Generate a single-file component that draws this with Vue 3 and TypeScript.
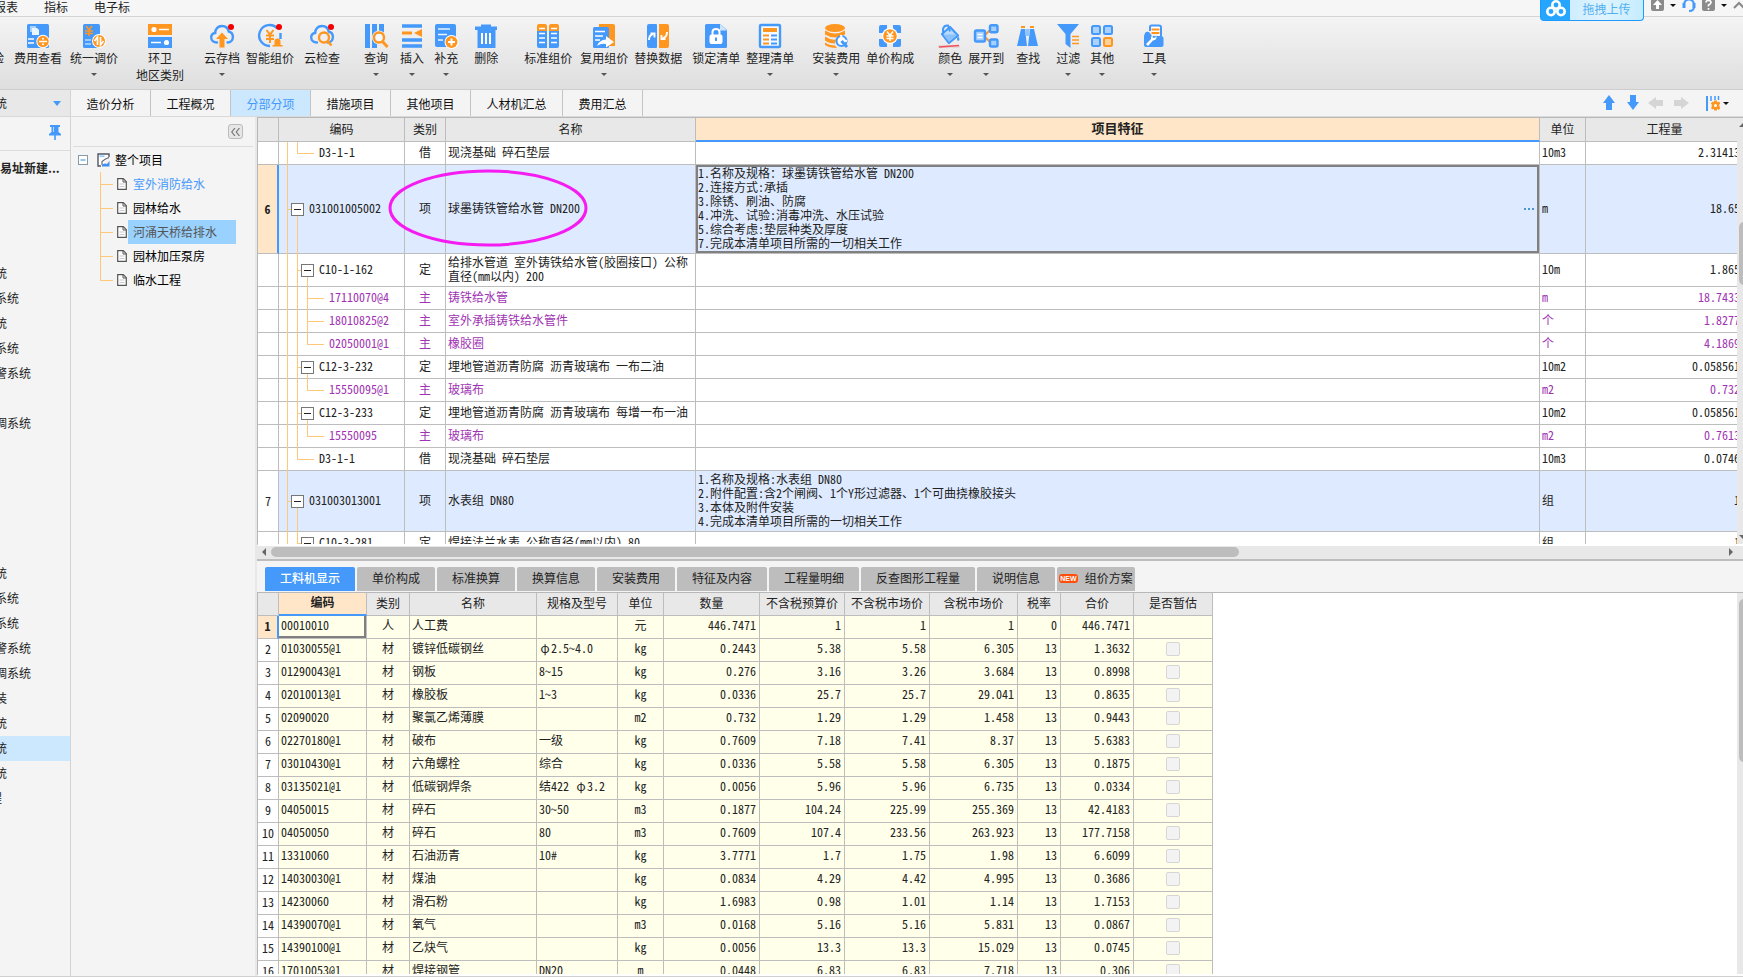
<script setup lang="ts">
interface Tool { label: string; sub?: string; icon: string; gap: number; menu?: boolean }
interface Guide { x: number; part: 'whole' | 'top' | 'bottom' }
interface BillRow {
  no?: string; level: number; box: boolean; last?: boolean; code: string; kind: string
  name: string; feature?: string[]; unit: string; qty: string
  tone?: 'item' | 'main'; tall?: boolean; current?: boolean
}

const tools: Tool[] = [
  { label: '费用查看', icon: 'fee', gap: 10 },
  { label: '统一调价', icon: 'adjust', gap: 8, menu: true },
  { label: '环卫', sub: '地区类别', icon: 'region', gap: 18 },
  { label: '云存档', icon: 'cloudUp', gap: 20, menu: true },
  { label: '智能组价', icon: 'smart', gap: 6 },
  { label: '云检查', icon: 'cloudCheck', gap: 10 },
  { label: '查询', icon: 'query', gap: 24, menu: true },
  { label: '插入', icon: 'insert', gap: 12, menu: true },
  { label: '补充', icon: 'append', gap: 10, menu: true },
  { label: '删除', icon: 'trash', gap: 16 },
  { label: '标准组价', icon: 'standard', gap: 26 },
  { label: '复用组价', icon: 'reuse', gap: 8, menu: true },
  { label: '替换数据', icon: 'replace', gap: 6 },
  { label: '锁定清单', icon: 'lock', gap: 10 },
  { label: '整理清单', icon: 'tidy', gap: 6, menu: true },
  { label: '安装费用', icon: 'install', gap: 18, menu: true },
  { label: '单价构成', icon: 'price', gap: 6 },
  { label: '颜色', icon: 'color', gap: 24, menu: true },
  { label: '展开到', icon: 'expand', gap: 6, menu: true },
  { label: '查找', icon: 'find', gap: 12 },
  { label: '过滤', icon: 'filter', gap: 16, menu: true },
  { label: '其他', icon: 'other', gap: 10, menu: true },
  { label: '工具', icon: 'tool', gap: 28, menu: true },
]

const cloud = '<path d="M7 18.500C3.500 18.500 1.200 16.300 1.200 13.500C1.200 11 3 9.300 5.200 9C5.200 4.800 8.200 2 12 2C15.500 2 18 4.200 18.700 7.500C21.200 8.200 22.900 10.200 22.900 12.900C22.900 16 20.600 18.300 17.500 18.500" fill="none" stroke="#4499fb" stroke-width="2.400" stroke-linecap="round"/>'
const dot = '<circle cx="21" cy="3" r="3" fill="#f40000"/>'
const yen = '<path d="M8.500 6L12 10.500L15.500 6M12 10.500V19M8 11.500H16M8 15H16" fill="none" stroke="#ff961f" stroke-width="2"/>'

const icons: Record<string, string> = {
  fee: '<rect x="1" width="22" height="24" rx="1.500" fill="#4499fb"/><path d="M4 2h6v6H4z" fill="#a9d3ff"/><path d="M6 4h5l2 2v5H6z" fill="#eaf5ff"/><path d="M2 15h6M2 19h6" stroke="#fff" stroke-width="1.600"/><circle cx="17" cy="17.500" r="6.700" fill="#fff"/><circle cx="17" cy="17.500" r="5.700" fill="#ff961f"/><path d="M13 17.500h8" stroke="#fff" stroke-width="1.500"/><circle cx="17" cy="14.800" r="1" fill="#fff"/><circle cx="17" cy="20.300" r="1" fill="#fff"/>',
  adjust: '<rect x="1" width="17" height="24" rx="1.500" fill="#4499fb"/><path d="M4 2l3 4l3-4M7 6v6M3 7h8M3 9.500h8" fill="none" stroke="#ff961f" stroke-width="1.600"/><path d="M3 16h6M3 20h6" stroke="#b5daff" stroke-width="1.500"/><circle cx="17" cy="17" r="7" fill="#fff"/><circle cx="17" cy="17" r="6" fill="#ff961f"/><path d="M15.500 21v-8l-3 4M18.500 13v8l3-4" fill="none" stroke="#fff" stroke-width="1.700"/>',
  region: '<rect y="0" width="24" height="11" fill="#ff961f"/><rect y="13" width="24" height="11" fill="#4499fb"/><circle cx="6" cy="5.500" r="2.600" fill="#fff"/><path d="M11 5.500h10M3 18.500h10" stroke="#fff" stroke-width="1.600"/><circle cx="18.500" cy="18.500" r="2.600" fill="#fff"/>',
  cloudUp: cloud + '<path d="M12 8.500l6 6.500h-3.500v8.500h-5V15H6z" fill="#ff961f"/>' + dot,
  smart: '<path d="M19.500 4.500A10.500 10.500 0 1 0 12 22M22.500 9v6" fill="none" stroke="#4499fb" stroke-width="2.400"/>' + yen + '<path d="M19.500 14.500a3 3 0 0 1 3 3v3.500h2v1.500h-10V21h2v-3.500a3 3 0 0 1 3-3z" fill="#ff961f"/>' + dot,
  cloudCheck: cloud + '<circle cx="14" cy="13.500" r="5" fill="#eee" stroke="#ff961f" stroke-width="2.400"/><path d="M17.500 17l4 4.500" stroke="#ff961f" stroke-width="2.600"/>' + dot,
  query: '<rect x="1" width="5" height="24" fill="#4499fb"/><rect x="8" width="5" height="24" fill="#4499fb"/><rect x="15" width="5" height="10" fill="#4499fb"/><circle cx="15" cy="13.500" r="7" fill="#eee"/><circle cx="15" cy="13.500" r="5" fill="#f4f8ff" stroke="#ff961f" stroke-width="2.400"/><path d="M18.500 17.500l5 5.500" stroke="#ff961f" stroke-width="3"/>',
  insert: '<path d="M2 2h20M2 16h20M2 22h20" stroke="#4499fb" stroke-width="3.400"/><path d="M2 9h10" stroke="#ff961f" stroke-width="3"/><path d="M14 9l8-4v8z" fill="#ff961f"/>',
  append: '<rect x="1" width="21" height="23" rx="2" fill="#4499fb"/><path d="M4 5h12M4 10.500h9M4 16h5" stroke="#e8f4ff" stroke-width="1.700"/><circle cx="17.500" cy="18" r="7" fill="#fff"/><circle cx="17.500" cy="18" r="6" fill="#ff961f"/><path d="M17.500 14.500v7M14 18h7" stroke="#fff" stroke-width="1.900"/>',
  trash: '<path d="M1 2.500h6V.500h10v2h6V6h-1.500v18h-18V6H1z" fill="#4499fb"/><path d="M8 9v11M12 9v11M16 9v11" stroke="#fff" stroke-width="2"/>',
  standard: '<path d="M1 2q0-2 2-2h6q2 0 2 2v6H1zM13 2q0-2 2-2h6q2 0 2 2v6H13z" fill="#ff961f"/><path d="M1 7h10v17H3q-2 0-2-2zM13 7h10v15q0 2-2 2h-8z" fill="#4499fb"/><path d="M3 4.500h6M15 4.500h6M3 9.500h6M15 9.500h6M3 14h6M15 14h6M3 18.500h6M15 18.500h6" stroke="#fff" stroke-width="1.400"/>',
  reuse: '<path d="M7 0h14q2 0 2 2v20h-8L7 10z" fill="#ff961f"/><rect x="1" y="3" width="16" height="21" rx="1.500" fill="#4499fb"/><path d="M3 7.500h10M3 12h8M3 16h5" stroke="#fff" stroke-width="1.500"/><path d="M5 22q2-6 9-6.500V12l8 6l-8 5.500V20q-5-1-9 2z" fill="#fff"/>',
  replace: '<path d="M3 0h7q1 0 1 1v22q0 1-1 1H3q-2 0-2-2V2q0-2 2-2z" fill="#4499fb"/><path d="M13 0h8q2 0 2 2v20q0 2-2 2h-8z" fill="#ff961f"/><path d="M3 16q0-5 4-6M4.500 9.500h4v4M21 8q0 5-4 6M19.500 15h-4v-4" fill="none" stroke="#fff" stroke-width="1.900"/>',
  lock: '<path d="M1 1.500Q1 0 2.500 0H16l7 6v16.500q0 1.500-1.500 1.500h-19Q1 24 1 22.500z" fill="#4499fb"/><path d="M16 0l7 6.500h-7z" fill="#cfe6ff"/><path d="M8.500 11V8q0-3 3.500-3t3.500 3v3" fill="none" stroke="#fff" stroke-width="2"/><rect x="5.500" y="10.500" width="13" height="9.500" rx="2" fill="#fff"/><path d="M12 13.500v3.500" stroke="#4499fb" stroke-width="2"/>',
  tidy: '<rect x="2" y="1" width="20" height="22" rx="1" fill="#f6faff" stroke="#4499fb" stroke-width="2.400"/><rect x="5" y="4" width="14" height="4" fill="#ff961f"/><path d="M5 11.500h6M5 15.500h6M5 19.500h6" stroke="#ff961f" stroke-width="1.800"/><path d="M13 11.500h6M13 15.500h6M13 19.500h6" stroke="#4499fb" stroke-width="1.800"/>',
  install: '<ellipse cx="11" cy="4" rx="10" ry="4" fill="#ff961f"/><path d="M1 6.500q10 6 20 0v4q-10 6-20 0zM1 12.500q6 4 11 3q-1 2-1 4q-6 0-10-3zM1 18.500q4 3 10 3l2 2.500q-8 0-12-3z" fill="#ff961f"/><circle cx="17.500" cy="17" r="5" fill="#fff" stroke="#4499fb" stroke-width="2.200"/><path d="M17 11l1 5l5 1" fill="none" stroke="#fff" stroke-width="2.200"/><path d="M17.500 17l5.500 6" stroke="#4499fb" stroke-width="3"/>',
  price: '<path d="M1 3q0-2 2-2h6v4L5 9H1zM23 3q0-2-2-2h-6v4l4 4h4zM1 21q0 2 2 2h6v-4l-4-4H1zM23 21q0 2-2 2h-6v-4l4-4h4z" fill="#4499fb"/><circle cx="12" cy="12" r="8" fill="#fff"/><circle cx="12" cy="12" r="6.800" fill="#ff961f"/><path d="M9 7.500l3 4l3-4M12 11.500V17M8.500 12h7M8.500 14.500h7" fill="none" stroke="#fff" stroke-width="1.500"/>',
  color: '<path d="M4 10L12 3l8 8.500L11 19z" fill="#b9dbff" stroke="#4499fb" stroke-width="2.200" stroke-linejoin="round"/><path d="M5 11V5q1-4 5-3.500l2 6" fill="none" stroke="#4499fb" stroke-width="2"/><path d="M5 10.500h14L11 18z" fill="#8cc1fc"/><path d="M20 12q3 4 0 5q-2-1 0-5z" fill="#4499fb"/><rect x="0" y="21" width="22" height="3" rx="1" fill="#e4d8d8"/><path d="M1 23l20-1.500" stroke="#f2505b" stroke-width="1.400"/>',
  expand: '<path d="M10 12L17 5M10 12l7 7" stroke="#ff961f" stroke-width="1.800"/><rect x="1" y="6.500" width="10" height="11" rx="1.500" fill="#a4cfff" stroke="#4499fb" stroke-width="2.400"/><path d="M3.500 10.500h5M3.500 13.500h5" stroke="#fff" stroke-width="1.400"/><rect x="16" y="1.200" width="7.500" height="7" rx="1.500" fill="#a4cfff" stroke="#4499fb" stroke-width="2.400"/><rect x="16" y="15.500" width="7.500" height="7" rx="1.500" fill="#a4cfff" stroke="#4499fb" stroke-width="2.400"/>',
  find: '<path d="M5 2h4v2H5zM14 2h4v2h-4z" fill="#ff961f"/><path d="M5 5h4l2 17H1zM14 5h4l4 17H12z" fill="#4499fb"/><rect x="9.500" y="5" width="4" height="7" fill="#8dc3ff"/>',
  filter: '<path d="M1 0h22L14.500 10v14l-5-4V10z" fill="#4499fb"/><path d="M16 12.500h7M16 16h7M16 19.500h7" stroke="#ff961f" stroke-width="1.700"/>',
  other: '<g fill="#a9d2ff" stroke="#4499fb" stroke-width="2"><rect x="2" y="2" width="8" height="8" rx="1.500"/><rect x="14" y="2" width="8" height="8" rx="1.500"/><rect x="2" y="14" width="8" height="8" rx="1.500"/></g><rect x="14" y="14" width="8" height="8" rx="1.500" fill="#ffd09a" stroke="#ff961f" stroke-width="2"/>',
  tool: '<path d="M8 7V3q0-1.500 1.500-1.500H17q2 0 2 2V12" fill="#fff" stroke="#4499fb" stroke-width="2"/><path d="M9.500 5.500h8M9.500 9h8" stroke="#ff961f" stroke-width="1.800"/><path d="M3 9q1.500-2 4-1l3 4h9q2.500 0 2.500 2.500V21q0 2-2 2H4q-2 0-2-2v-9z" fill="#4499fb"/><path d="M4 20l5-5q-.500-3 2-4l-.500 2.500l2 .500l2-2q.500 4-3.500 4.500L6 22z" fill="#fff"/>',
}

const sideItems = [
  '统', '系统', '统', '系统', '警系统', '', '调系统', '', '', '', '', '',
  '统', '系统', '系统', '警系统', '调系统', '装', '统', '统', '统', '程',
]
const sideSelected = 19

const pageTabs = ['造价分析', '工程概况', '分部分项', '措施项目', '其他项目', '人材机汇总', '费用汇总']
const units = ['室外消防给水', '园林给水', '河涌天桥给排水', '园林加压泵房', '临水工程']

const bill: BillRow[] = [
  { level: 2, box: false, last: true, code: 'D3-1-1', kind: '借', name: '现浇基础 碎石垫层', unit: '10m3', qty: '2.31413' },
  {
    no: '6', level: 1, box: true, code: '031001005002', kind: '项', name: '球墨铸铁管给水管 DN200', unit: 'm', qty: '18.65', tone: 'item', current: true,
    feature: ['1.名称及规格：球墨铸铁管给水管 DN200', '2.连接方式:承插', '3.除锈、刷油、防腐', '4.冲洗、试验:消毒冲洗、水压试验', '5.综合考虑:垫层种类及厚度', '7.完成本清单项目所需的一切相关工作'],
  },
  { level: 2, box: true, code: 'C10-1-162', kind: '定', name: '给排水管道 室外铸铁给水管(胶圈接口) 公称直径(mm以内) 200', unit: '10m', qty: '1.865', tall: true },
  { level: 3, box: false, code: '17110070@4', kind: '主', name: '铸铁给水管', unit: 'm', qty: '18.7433', tone: 'main' },
  { level: 3, box: false, code: '18010825@2', kind: '主', name: '室外承插铸铁给水管件', unit: '个', qty: '1.8277', tone: 'main' },
  { level: 3, box: false, last: true, code: '02050001@1', kind: '主', name: '橡胶圈', unit: '个', qty: '4.1869', tone: 'main' },
  { level: 2, box: true, code: 'C12-3-232', kind: '定', name: '埋地管道沥青防腐 沥青玻璃布 一布二油', unit: '10m2', qty: '0.058561' },
  { level: 3, box: false, last: true, code: '15550095@1', kind: '主', name: '玻璃布', unit: 'm2', qty: '0.732', tone: 'main' },
  { level: 2, box: true, code: 'C12-3-233', kind: '定', name: '埋地管道沥青防腐 沥青玻璃布 每增一布一油', unit: '10m2', qty: '0.058561' },
  { level: 3, box: false, last: true, code: '15550095', kind: '主', name: '玻璃布', unit: 'm2', qty: '0.7613', tone: 'main' },
  { level: 2, box: false, last: true, code: 'D3-1-1', kind: '借', name: '现浇基础 碎石垫层', unit: '10m3', qty: '0.0746' },
  {
    no: '7', level: 1, box: true, code: '031003013001', kind: '项', name: '水表组 DN80', unit: '组', qty: '1', tone: 'item',
    feature: ['1.名称及规格:水表组 DN80', '2.附件配置:含2个闸阀、1个Y形过滤器、1个可曲挠橡胶接头', '3.本体及附件安装', '4.完成本清单项目所需的一切相关工作'],
  },
  { level: 2, box: true, code: 'C10-3-281', kind: '定', name: '焊接法兰水表 公称直径(mm以内) 80', unit: '组', qty: '1' },
]

function guides(r: BillRow): Guide[] {
  const g: Guide[] = []
  for (let l = 1; l < r.level; l++) g.push({ x: l * 10 - 2, part: 'whole' })
  g.push({ x: r.level * 10 - 2, part: r.last ? 'top' : 'whole' })
  if (r.box) g.push({ x: r.level * 10 + 8, part: 'bottom' })
  return g
}

const detailTabs = [
  { t: '工料机显示', w: 'w90' }, { t: '单价构成', w: 'w78' }, { t: '标准换算', w: 'w78' }, { t: '换算信息', w: 'w78' },
  { t: '安装费用', w: 'w78' }, { t: '特征及内容', w: 'w90' }, { t: '工程量明细', w: 'w90' }, { t: '反查图形工程量', w: 'w114' },
  { t: '说明信息', w: 'w78' }, { t: '组价方案', w: 'w78', isNew: true },
]
const detailHead = ['编码', '类别', '名称', '规格及型号', '单位', '数量', '不含税预算价', '不含税市场价', '含税市场价', '税率', '合价', '是否暂估']
const detail: string[][] = [
  ['00010010', '人', '人工费', '', '元', '446.7471', '1', '1', '1', '0', '446.7471'],
  ['01030055@1', '材', '镀锌低碳钢丝', 'φ2.5~4.0', 'kg', '0.2443', '5.38', '5.58', '6.305', '13', '1.3632'],
  ['01290043@1', '材', '钢板', '8~15', 'kg', '0.276', '3.16', '3.26', '3.684', '13', '0.8998'],
  ['02010013@1', '材', '橡胶板', '1~3', 'kg', '0.0336', '25.7', '25.7', '29.041', '13', '0.8635'],
  ['02090020', '材', '聚氯乙烯薄膜', '', 'm2', '0.732', '1.29', '1.29', '1.458', '13', '0.9443'],
  ['02270180@1', '材', '破布', '一级', 'kg', '0.7609', '7.18', '7.41', '8.37', '13', '5.6383'],
  ['03010430@1', '材', '六角螺栓', '综合', 'kg', '0.0336', '5.58', '5.58', '6.305', '13', '0.1875'],
  ['03135021@1', '材', '低碳钢焊条', '结422 φ3.2', 'kg', '0.0056', '5.96', '5.96', '6.735', '13', '0.0334'],
  ['04050015', '材', '碎石', '30~50', 'm3', '0.1877', '104.24', '225.99', '255.369', '13', '42.4183'],
  ['04050050', '材', '碎石', '80', 'm3', '0.7609', '107.4', '233.56', '263.923', '13', '177.7158'],
  ['13310060', '材', '石油沥青', '10#', 'kg', '3.7771', '1.7', '1.75', '1.98', '13', '6.6099'],
  ['14030030@1', '材', '煤油', '', 'kg', '0.0834', '4.29', '4.42', '4.995', '13', '0.3686'],
  ['14230060', '材', '滑石粉', '', 'kg', '1.6983', '0.98', '1.01', '1.14', '13', '1.7153'],
  ['14390070@1', '材', '氧气', '', 'm3', '0.0168', '5.16', '5.16', '5.831', '13', '0.0867'],
  ['14390100@1', '材', '乙炔气', '', 'kg', '0.0056', '13.3', '13.3', '15.029', '13', '0.0745'],
  ['17010053@1', '材', '焊接钢管', 'DN20', 'm', '0.0448', '6.83', '6.83', '7.718', '13', '0.306'],
]
const align = (c: number) => (c === 1 || c === 4 ? 'ctr' : c >= 5 ? 'num' : '')
// The diameter sign takes a full-width slot.
const pieces = (v: string) => v.split(/(φ)/).filter(Boolean)
</script>

<template>
  <div class="app">
    <header class="menubar">
      <nav class="menus">
        <button class="cut-menu"><span>报表</span></button>
        <button>指标</button>
        <button>电子标</button>
      </nav>
      <div class="menu-right">
        <button class="upload">
          <span class="up-logo">
            <svg width="22" height="18" viewBox="0 0 22 18" fill="none" stroke="#fff" stroke-width="2.600"><circle cx="11" cy="5" r="3.700" /><circle cx="6" cy="11.500" r="3.700" /><circle cx="16" cy="11.500" r="3.700" /></svg>
          </span>
          <span class="up-text">拖拽上传</span>
        </button>
        <button class="sys" aria-label="上传"><svg width="13" height="12" viewBox="0 0 13 12"><rect y="-3" width="13" height="14" rx="2" fill="#8b8b8b" /><path d="M6.500 0L11 5H8v4H5V5H2z" fill="#fff" /></svg></button>
        <i class="caret dark"></i>
        <button class="sys" aria-label="客服"><svg width="14" height="13" viewBox="0 0 14 13" fill="none" stroke="#4499fb" stroke-width="2"><path d="M2 7V4q1-4.500 5-4.500T12 4v3q0 4-5 4" /><path d="M2 3v5M12 3v5" stroke-width="3" /></svg></button>
        <button class="sys" aria-label="帮助"><svg width="13" height="12" viewBox="0 0 13 12"><rect y="-3" width="13" height="14" rx="2" fill="#8b8b8b" /><path d="M4 2.500Q4 .500 6.500.500T9 2.500Q9 4 6.500 5v1.500M6.500 8v1.800" stroke="#fff" stroke-width="1.700" fill="none" /></svg></button>
        <i class="caret dark"></i>
        <svg class="chev" width="10" height="8" viewBox="0 0 10 8"><path d="M1 7l5-5l5 5" fill="none" stroke="#888" stroke-width="2" /></svg>
      </div>
    </header>

    <div class="ribbon">
      <button class="tool cut-tool"><span class="lbl">检验</span></button>
      <button v-for="t in tools" :key="t.label" class="tool" :style="{ marginLeft: t.gap + 'px' }">
        <svg width="24" height="24" viewBox="0 0 24 24" v-html="icons[t.icon]"></svg>
        <span class="lbl">{{ t.label }}</span>
        <span v-if="t.sub" class="lbl">{{ t.sub }}</span>
        <i v-if="t.menu" class="caret"></i>
      </button>
    </div>

    <div class="tabrow">
      <button class="picker"><span class="cut cut1">统</span><i class="caret blue"></i></button>
      <nav class="ptabs">
        <button v-for="(p, i) in pageTabs" :key="p" :class="{ on: i === 2, wide: i === 5 }">{{ p }}</button>
      </nav>
      <div class="nav-tools">
        <button aria-label="上移"><svg width="12" height="16" viewBox="0 0 12 16"><path d="M6 0l6 8H9v7H3V8H0z" fill="#4499fb" /></svg></button>
        <button aria-label="下移"><svg width="12" height="16" viewBox="0 0 12 16"><path d="M6 15l6-8H9V0H3v7H0z" fill="#4499fb" /></svg></button>
        <button class="side-arrow" aria-label="后退"><svg width="16" height="12" viewBox="0 0 16 12"><path d="M0 6l8-6v3h7v6H8v3z" fill="#d5d5d5" /></svg></button>
        <button class="side-arrow" aria-label="前进"><svg width="16" height="12" viewBox="0 0 16 12"><path d="M16 6L8 0v3H1v6h7v3z" fill="#d5d5d5" /></svg></button>
        <button class="cols" aria-label="列设置"><svg width="14" height="15" viewBox="0 0 14 15"><path d="M1 0v15" stroke="#4499fb" stroke-width="2" /><path d="M5 0v5M9 0v4M12.500 0v4" stroke="#4499fb" stroke-width="1.500" /><g fill="#ff961f"><circle cx="9.500" cy="9.500" r="3.800" /><path d="M8 4.500h3v10H8zM4.700 7.500l2-2l8 6l-2 2.500zM4.700 12l8-6.500l2 2l-8 6z" /></g><circle cx="9.500" cy="9.500" r="1.500" fill="#fff" /></svg><i class="caret dark"></i></button>
      </div>
    </div>

    <div class="body">
      <aside class="side">
        <div class="pinrow"><button aria-label="固定"><svg width="12" height="15" viewBox="0 0 12 15"><path d="M1 0h10v2H9.500v5L12 9v1.500H0V9l2.500-2V2H1zM5.200 10h1.600v5H5.200z" fill="#4499fb" /><path d="M4.500 2v5" stroke="#b7d9ff" /></svg></button></div>
        <div class="proj">易址新建...</div>
        <ul>
          <li v-for="(s, i) in sideItems" :key="i" :class="{ sel: i === sideSelected }">
            <span class="cut" :class="s === '程' ? 'cut0' : 'cut' + s.length">{{ s }}</span>
          </li>
        </ul>
      </aside>

      <section class="tree">
        <div class="treetop"><button aria-label="收起"><svg width="9" height="8" viewBox="0 0 9 8"><path d="M4 0L.800 4L4 8M8.500 0L5.300 4l3.200 4" fill="none" stroke="#777" stroke-width="1.200" /></svg></button></div>
        <div class="root">
          <svg width="10" height="10" viewBox="0 0 10 10"><rect x=".500" y=".500" width="9" height="9" fill="#fff" stroke="#8a99a5" /><path d="M2.500 5h5" stroke="#2c8fd0" /></svg>
          <svg class="proj-ico" width="13" height="14" viewBox="0 0 13 14"><path d="M12 4V1H1v12h3" fill="#fff" stroke="#556" stroke-width="1.400" /><path d="M12 4.500L8.500 6L5 8.500V12" fill="none" stroke="#667" stroke-width="1.200" /><path d="M2.500 3.200h5" stroke="#8fc6f5" stroke-width="1.500" /><path d="M5 13.500v-2l3-1l2 .500l2.500-3v5.500z" fill="#3f8fec" /></svg>
          <span>整个项目</span>
        </div>
        <ul>
          <li v-for="(u, i) in units" :key="u" :class="{ first: i === 0, sel: i === 2 }">
            <i class="branch"></i>
            <svg width="10" height="12" viewBox="0 0 10 12"><path d="M.700.700h5.600l3 3v7.600H.700z" fill="#fff" stroke="#555" stroke-width="1.200" /><path d="M6 .700v3.300h3.300" fill="none" stroke="#555" /><path d="M2.500 6h5M2.500 8.500h5" stroke="#bbb" stroke-width=".800" /></svg>
            <a href="#">{{ u }}</a>
          </li>
        </ul>
      </section>

      <main class="work">
        <section class="upper">
          <div class="grid-row">
            <div class="grid-clip">
              <table class="grid bill">
                <colgroup><col class="c-no"><col class="c-code"><col class="c-kind"><col class="c-name"><col><col class="c-unit"><col class="c-qty"></colgroup>
                <thead><tr><th></th><th>编码</th><th>类别</th><th>名称</th><th class="hot">项目特征</th><th>单位</th><th>工程量</th></tr></thead>
                <tbody>
                  <tr v-for="(r, i) in bill" :key="i" :class="[r.tone, { tall: r.tall, current: r.current }]">
                    <td class="no">{{ r.no }}</td>
                    <td class="code" :class="'lv' + r.level">
                      <i v-for="(g, k) in guides(r)" :key="k" class="guide" :class="g.part" :style="{ left: g.x + 'px' }"></i>
                      <i class="twig" :class="{ leaf: !r.box }"></i>
                      <button v-if="r.box" class="box" aria-label="折叠"></button>
                      {{ r.code }}
                    </td>
                    <td class="ctr">{{ r.kind }}</td>
                    <td>{{ r.name }}</td>
                    <td class="feat">
                      <div v-for="f in r.feature" :key="f">{{ f }}</div>
                      <button v-if="r.current" class="more" aria-label="更多"><i></i><i></i><i></i></button>
                    </td>
                    <td>{{ r.unit }}</td>
                    <td class="num">{{ r.qty }}</td>
                  </tr>
                </tbody>
              </table>
              <svg class="mark" viewBox="0 0 200 78"><ellipse cx="100" cy="39" rx="98" ry="37" fill="none" stroke="#f41cf0" stroke-width="3" /></svg>
            </div>
            <div class="vbar"><i class="tri-up"></i><i class="vthumb"></i><i class="tri-down"></i></div>
          </div>
          <div class="hbar"><i class="tri-left"></i><div class="htrack"><i class="hthumb"></i></div><i class="tri-right"></i></div>
        </section>

        <section class="lower">
          <nav class="dtabs">
            <button v-for="(d, i) in detailTabs" :key="d.t" :class="[d.w, { on: i === 0 }]"><b v-if="d.isNew">NEW</b>{{ d.t }}</button>
          </nav>
          <div class="grid-row">
            <div class="grid-clip">
              <table class="grid detail">
                <colgroup>
                  <col class="c-no"><col class="d1"><col class="d2"><col class="d3"><col class="d4"><col class="c-unit"><col class="d6"><col class="d7"><col class="d7"><col class="d1"><col class="d2"><col class="d11"><col class="d12">
                </colgroup>
                <thead><tr><th></th><th v-for="(h, i) in detailHead" :key="h" :class="{ hot: i === 0 }">{{ h }}</th></tr></thead>
                <tbody>
                  <tr v-for="(r, i) in detail" :key="r[0]" :class="{ current: i === 0 }">
                    <td class="no">{{ i + 1 }}</td>
                    <td v-for="(v, c) in r" :key="c" :class="[align(c), { pick: i === 0 && c === 0 }]"><span v-for="(p, k) in pieces(v)" :key="k" :class="{ phi: p === 'φ' }">{{ p }}</span></td>
                    <td class="tick"><input v-if="i > 0" type="checkbox" :aria-label="'是否暂估 ' + r[2]"></td>
                  </tr>
                </tbody>
              </table>
            </div>
            <div class="vbar"><i class="vthumb low"></i></div>
          </div>
        </section>
      </main>
    </div>
  </div>
</template>

<style>
body { margin: 0; overflow: hidden; }
</style>

<style scoped>
.app { height: 100vh; box-sizing: border-box; display: flex; flex-direction: column; overflow: hidden; background: #f4f4f4; border-bottom: 1px solid #d0d0d0; color: #222; font: 12px/16px "Noto Sans CJK SC", sans-serif; }
button { font: inherit; color: inherit; background: none; border: 0; padding: 0; margin: 0; white-space: nowrap; }
ul { list-style: none; margin: 0; padding: 0; }
svg { display: block; flex: none; }
i { display: block; flex: none; }
.caret { width: 0; height: 0; border: 3px solid transparent; border-top-color: #555; border-bottom: 0; }
.caret.dark { border-top-color: #111; }
.caret.blue { border-width: 5px 4px 0; border-top-color: #4499fb; }

.menubar { flex: none; height: 16px; display: flex; justify-content: space-between; background: #f6f6f6; border-bottom: 1px solid #d4d4d4; }
.menus { display: flex; gap: 26px; height: 14px; line-height: 14px; align-items: flex-start; }
.cut-menu { width: 18px; display: flex; justify-content: flex-end; overflow: hidden; }
.menu-right { display: flex; align-items: flex-start; height: 16px; }
.upload { position: relative; z-index: 2; display: flex; height: 21px; box-sizing: border-box; width: 104px; border: 1px solid #1e9bff; border-top: 0; border-radius: 0 0 4px 4px; background: linear-gradient(90deg, #bfe7fd, #e0f4ff 60%, #c5ecff); margin-right: 7px; }
.up-logo { width: 29px; height: 20px; background: #25a5ff; display: flex; justify-content: center; align-items: flex-start; }
.up-text { flex: 1; text-align: center; line-height: 18px; color: #52b0f0; }
.sys { margin-right: 6px; }
.sys + .caret { margin: 4px 6px 0 0; }
.chev { margin-top: 1px; }

.ribbon { flex: none; height: 72px; display: flex; align-items: flex-start; border-bottom: 1px solid #cecece; background: linear-gradient(#f4f4f4, #dedede); }
.tool { display: flex; flex-direction: column; align-items: center; padding-top: 7px; }
.tool svg { overflow: visible; margin-bottom: 2px; }
.tool .lbl { line-height: 16px; color: #222; }
.tool .lbl + .lbl { margin-top: 1px; }
.tool .caret { margin-top: 7px; }
.cut-tool { width: 4px; padding-top: 33px; align-items: flex-end; overflow: hidden; }

.tabrow { flex: none; height: 26px; display: flex; border-bottom: 1px solid #d9d9d9; background: #f4f4f4; }
.picker { width: 71px; box-sizing: border-box; border-right: 1px solid #d4d4d4; background: #e8e8e8; display: flex; align-items: center; justify-content: space-between; padding-right: 9px; }
.cut { display: flex; justify-content: flex-end; overflow: hidden; white-space: nowrap; }
.cut0 { width: 2px; }
.cut1 { width: 7px; }
.cut2 { width: 19px; }
.cut3 { width: 31px; }
.ptabs { display: flex; }
.ptabs button { width: 80px; border-right: 1px solid #c4c4c4; color: #111; box-sizing: border-box; padding-top: 2px; }
.ptabs .wide { width: 92px; }
.ptabs .on { background: #cce8ff; color: #4499fb; }
.nav-tools { margin-left: auto; display: flex; align-items: center; gap: 12px; padding-right: 14px; }
.nav-tools .side-arrow { margin-left: -3px; }
.cols { display: flex; align-items: center; gap: 3px; margin-left: 5px; }

.body { flex: 1; min-height: 0; display: flex; }
.side { flex: none; width: 70px; border-right: 1px solid #d4d4d4; overflow: hidden; }
.pinrow { height: 33px; border-bottom: 1px solid #dcdcdc; display: flex; justify-content: flex-end; padding-right: 9px; }
.pinrow button { height: 30px; }
.proj { font-weight: 700; height: 100px; line-height: 16px; padding-top: 9px; box-sizing: border-box; white-space: nowrap; }
.side ul { padding-top: 10px; }
.side li { height: 25px; display: flex; align-items: center; padding-bottom: 1px; box-sizing: border-box; }
.side li.sel { background: #cce8ff; }

.tree { flex: none; width: 184px; border-right: 2px solid #e8e8e8; color: #000; }
.treetop { height: 29px; margin: 0 2px; border-bottom: 1px solid #dcdcdc; display: flex; justify-content: flex-end; align-items: flex-start; padding-right: 10px; }
.treetop button { margin-top: 7px; width: 15px; height: 15px; border: 1px solid #bbb; border-radius: 3px; background: #e6e6e6; display: flex; align-items: center; justify-content: center; box-sizing: border-box; }
.root { display: flex; align-items: center; height: 25px; padding-left: 7px; }
.proj-ico { margin: 0 5px 0 9px; }
.tree li { height: 24px; display: flex; align-items: center; padding-left: 29px; }
.branch { width: 13px; height: 24px; box-sizing: border-box; border-left: 1px solid #ffc878; margin-right: 4px; background: linear-gradient(#ffc878, #ffc878) 0 12px / 13px 1px no-repeat; }
.tree li:last-child .branch { height: 13px; align-self: flex-start; border-bottom: 1px solid #ffc878; background: none; }
.tree a { color: inherit; text-decoration: none; line-height: 24px; margin-left: 1px; padding: 0 19px 0 5px; }
.tree .first a { color: #4499fb; }
.tree .sel a { background: #99d1ff; color: #555; }

.work { flex: 1; min-width: 0; display: flex; flex-direction: column; }
.upper { flex: 443 1 0; min-height: 0; display: flex; flex-direction: column; border-bottom: 2px solid #bdbdbd; box-sizing: border-box; }
.lower { flex: 416 1 0; min-height: 0; display: flex; flex-direction: column; }
.grid-row { flex: 1; min-height: 0; display: flex; border: 1px solid #b8b8b8; border-width: 1px 0 0 1px; border-bottom: 2px solid #fff; background: #fff; }
.grid-clip { position: relative; flex: 1; min-width: 0; overflow: hidden; }

.grid { table-layout: fixed; border-collapse: separate; border-spacing: 0; font: 12px/14px "Noto Sans Mono CJK SC", "Noto Sans CJK SC", monospace; color: #222; }
.bill { width: calc(100% + 7px); }
.detail { width: 955px; }
.grid th { height: 23px; padding: 0 0 2px; font-weight: 400; background: #e8e8e8; border-right: 1px solid #bdbdbd; border-bottom: 1px solid #bdbdbd; box-sizing: border-box; white-space: nowrap; }
.bill th { height: 24px; }
.grid th.hot { background: #ffe6c8; border-bottom: 2px solid #4499fb; font-weight: 700; }
.bill th.hot { font-size: 13px; }
.grid td { height: 23px; box-sizing: border-box; padding: 0 2px 3px; border-right: 1px solid #bdbdbd; border-bottom: 1px solid #bdbdbd; word-break: break-all; }
.grid .ctr { text-align: center; }
.grid .num { text-align: right; padding-right: 3px; }
.grid .no { text-align: center; background: #fff; padding: 0 0 1px; }
.tall td { height: 33px; }
.item td { height: 61px; background: #deeaff; }
.item.current td { height: 89px; }
.main td { color: #a033b3; }
.grid .current .no { background: #ffe6c8; font-weight: 700; border-right: 2px solid #4499fb; }
.c-no { width: 21px; }
.c-code { width: 126px; }
.c-kind { width: 41px; }
.c-name { width: 250px; }
.c-unit { width: 46px; }
.c-qty { width: 158px; }
.d1 { width: 88px; }
.d2 { width: 43px; }
.d3 { width: 127px; }
.d4 { width: 81px; }
.d6 { width: 96px; }
.d7 { width: 85px; }
.d11 { width: 73px; }
.d12 { width: 79px; }

.grid .code { position: relative; white-space: nowrap; }
.grid .lv1 { padding-left: 30px; }
.grid .lv2 { padding-left: 40px; }
.grid .lv3 { padding-left: 50px; }
.guide { position: absolute; top: 0; bottom: -1px; width: 1px; background: #ffc878; }
.guide.top { bottom: 50%; }
.guide.bottom { top: 50%; }
.twig { position: absolute; top: 50%; height: 1px; width: 6px; background: #ffc878; }
.twig.leaf { width: 17px; }
.lv1 .twig { left: 8px; }
.lv2 .twig { left: 18px; }
.lv3 .twig { left: 28px; }
.box { position: absolute; top: calc(50% - 6px); width: 13px; height: 13px; border: 1px solid #777; background: linear-gradient(#222, #222) center / 7px 1px no-repeat #fff; }
.lv1 .box { left: 12px; }
.lv2 .box { left: 22px; }
.grid .feat { position: relative; }
.current .feat { box-shadow: inset 2px 2px #808080, inset -2px -2px #808080; }
.more { position: absolute; right: 4px; top: calc(50% - 2px); display: flex; gap: 2px; padding: 1px; }
.more i { width: 2px; height: 2px; background: #4a97cc; }
.mark { position: absolute; left: 130px; top: 51px; width: 200px; height: 78px; }
.grid .pick { box-shadow: inset -2px -2px #808080; }
.detail td { background: #ffffea; }
.grid .tick { padding: 0 0 1px; }
.phi { display: inline-block; width: 12px; text-align: center; }
.detail input { appearance: none; display: block; width: 14px; height: 14px; margin: 0 auto; border: 1px solid #d6d6d6; border-radius: 2px; background: #f3f3f3; }

.vbar { flex: none; width: 6px; background: #e8e8e8; display: flex; flex-direction: column; align-items: flex-end; overflow: hidden; justify-content: space-between; position: relative; }
.vthumb { position: absolute; left: 2px; top: 104px; width: 11px; height: 63px; border-radius: 5px; background: #bdbdbd; }
.vthumb.low { top: 6px; height: 163px; }
.tri-up { margin: 5px -4px 0 0; border: 4px solid transparent; border-top: 0; border-bottom-color: #666; }
.tri-down { margin: 0 -4px 5px 0; border: 4px solid transparent; border-bottom: 0; border-top-color: #666; }
.hbar { flex: none; height: 13px; display: flex; align-items: center; background: #e8e8e8; padding: 0 10px 0 5px; }
.tri-left { border: 4px solid transparent; border-left: 0; border-right-color: #666; }
.tri-right { border: 4px solid transparent; border-right: 0; border-left-color: #666; }
.htrack { flex: 1; padding: 0 5px; }
.hthumb { width: 66.6%; height: 10px; border-radius: 5px; background: #bdbdbd; }

.dtabs { flex: none; height: 25px; padding: 6px 0 0 8px; display: flex; gap: 2px; }
.dtabs button { height: 24px; box-sizing: border-box; padding-bottom: 1px; background: #bdbdbd; color: #222; border-radius: 2px 2px 0 0; display: flex; align-items: center; justify-content: center; gap: 7px; }
.dtabs .on { background: #4499fb; color: #fff; font-weight: 500; }
.dtabs b { background: #ff4f0a; color: #fff; font: 700 7px/9px "Liberation Sans", sans-serif; border-radius: 3px; padding: 0 1px; }
.w78 { width: 78px; }
.w90 { width: 90px; }
.w114 { width: 114px; }
</style>
